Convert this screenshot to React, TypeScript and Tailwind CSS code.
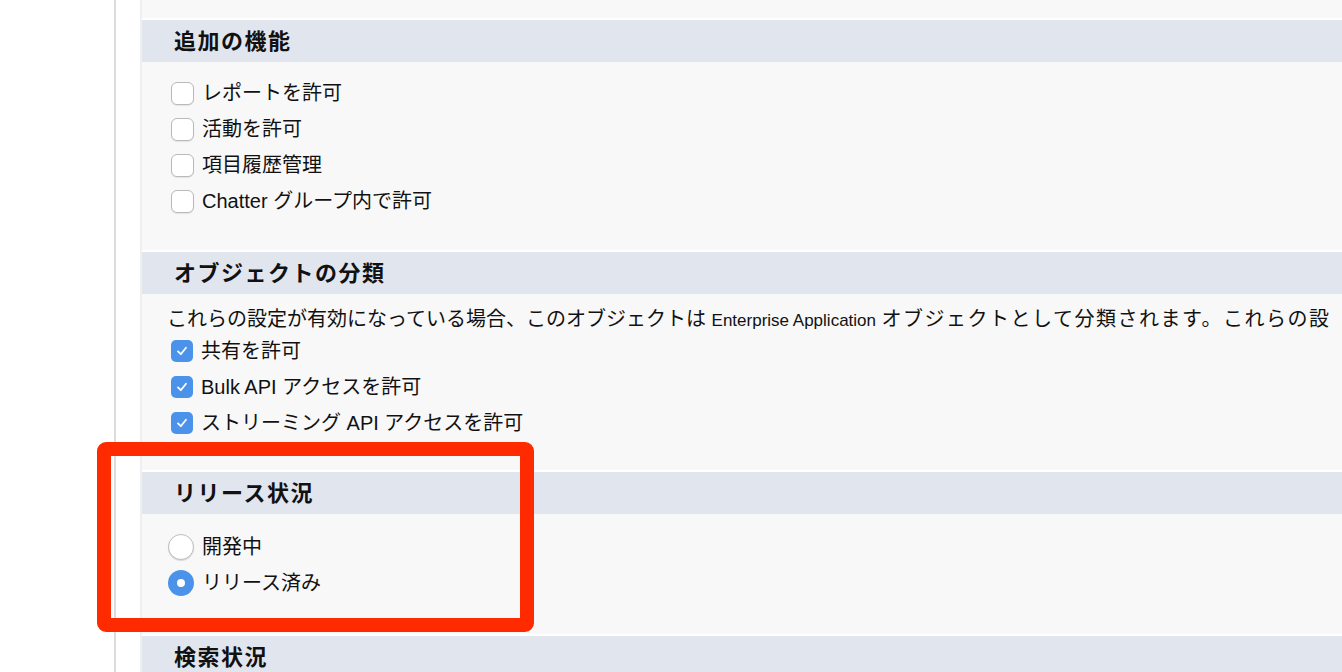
import React from 'react';

const font = { fontFamily: '"Liberation Sans", "Noto Sans CJK JP", sans-serif' };

const features = ['レポートを許可', '活動を許可', '項目履歴管理', 'Chatter グループ内で許可'];
const classification = ['共有を許可', 'Bulk API アクセスを許可', 'ストリーミング API アクセスを許可'];

const Checkbox: React.FC<{ checked?: boolean }> = ({ checked }) =>
    checked ? (
        <span className="flex h-[22px] w-[22px] shrink-0 items-center justify-center rounded-[5px] bg-[#4b93ea]">
            <svg width="14" height="14" viewBox="0 0 14 14" fill="none">
                <path d="M3 7.4 L5.8 10.2 L11 3.8" stroke="white" strokeWidth="1.8" strokeLinecap="round" strokeLinejoin="round" />
            </svg>
        </span>
    ) : (
        <span className="h-[23px] w-[23px] shrink-0 rounded-[6px] border border-[#b9b9b9] bg-white shadow-[0_1px_1px_rgba(0,0,0,0.08)]" />
    );

const Radio: React.FC<{ checked?: boolean }> = ({ checked }) =>
    checked ? (
        <span className="flex h-[26px] w-[26px] shrink-0 items-center justify-center rounded-full bg-[#4b93ea]">
            <span className="h-[8px] w-[8px] rounded-full bg-white" />
        </span>
    ) : (
        <span className="h-[26px] w-[26px] shrink-0 rounded-full border border-[#bdbdbd] bg-white shadow-[0_1px_1px_rgba(0,0,0,0.12)]" />
    );

const Header: React.FC<{ title: string }> = ({ title }) => (
    <div className="border-t-2 border-white">
        <div className="flex h-[42px] items-center bg-[#e1e5ee] pl-[32px] text-[22px] font-bold tracking-[1.5px] text-[#111]">
            {title}
        </div>
    </div>
);

const App: React.FC = () => {
    return (
        <div className="relative flex h-[672px] w-full overflow-hidden bg-white" style={font}>
            <div className="w-[114px] shrink-0" />
            <div className="w-[2px] shrink-0 bg-[#dcdcdc]" />
            <div className="w-[24px] shrink-0" />
            <div className="w-[2px] shrink-0 bg-[#efefef]" />

            <div className="flex min-w-0 flex-1 flex-col bg-[#f8f8f8] text-[#111]">
                <div className="h-[18px] shrink-0" />

                <Header title="追加の機能" />
                <div className="h-[188px] shrink-0 pl-[29px] pt-[13px]">
                    {features.map((label) => (
                        <div key={label} className="flex h-[36px] items-center gap-[8px] text-[20px]">
                            <Checkbox />
                            <span>{label}</span>
                        </div>
                    ))}
                </div>

                <Header title="オブジェクトの分類" />
                <div className="h-[176px] shrink-0 pt-[13px]">
                    <p className="overflow-hidden whitespace-nowrap pl-[25px] text-[20px] leading-[24px]">
                        これらの設定が有効になっている場合、このオブジェクトは <span className="text-[17px]">Enterprise Application</span>{' '}
                        <span className="tracking-[1.5px]">オブジェクトとして分類されます。これらの設</span>
                    </p>
                    <div className="pl-[29px]">
                        {classification.map((label) => (
                            <div key={label} className="flex h-[36px] items-center gap-[8px] text-[20px]">
                                <Checkbox checked />
                                <span>{label}</span>
                            </div>
                        ))}
                    </div>
                </div>

                <Header title="リリース状況" />
                <div className="h-[120px] shrink-0 pl-[26px] pt-[15px]">
                    <div className="flex h-[36px] items-center gap-[8px] text-[20px]">
                        <Radio />
                        <span>開発中</span>
                    </div>
                    <div className="flex h-[36px] items-center gap-[8px] text-[20px]">
                        <Radio checked />
                        <span>リリース済み</span>
                    </div>
                </div>

                <Header title="検索状況" />
                <div className="flex-1" />
            </div>

            {/* highlight frame */}
            <div className="pointer-events-none absolute left-[97px] top-[442px] h-[190px] w-[437px] rounded-[9px] border-[14px] border-[#ff2a00]" />
        </div>
    );
};

export default App;
